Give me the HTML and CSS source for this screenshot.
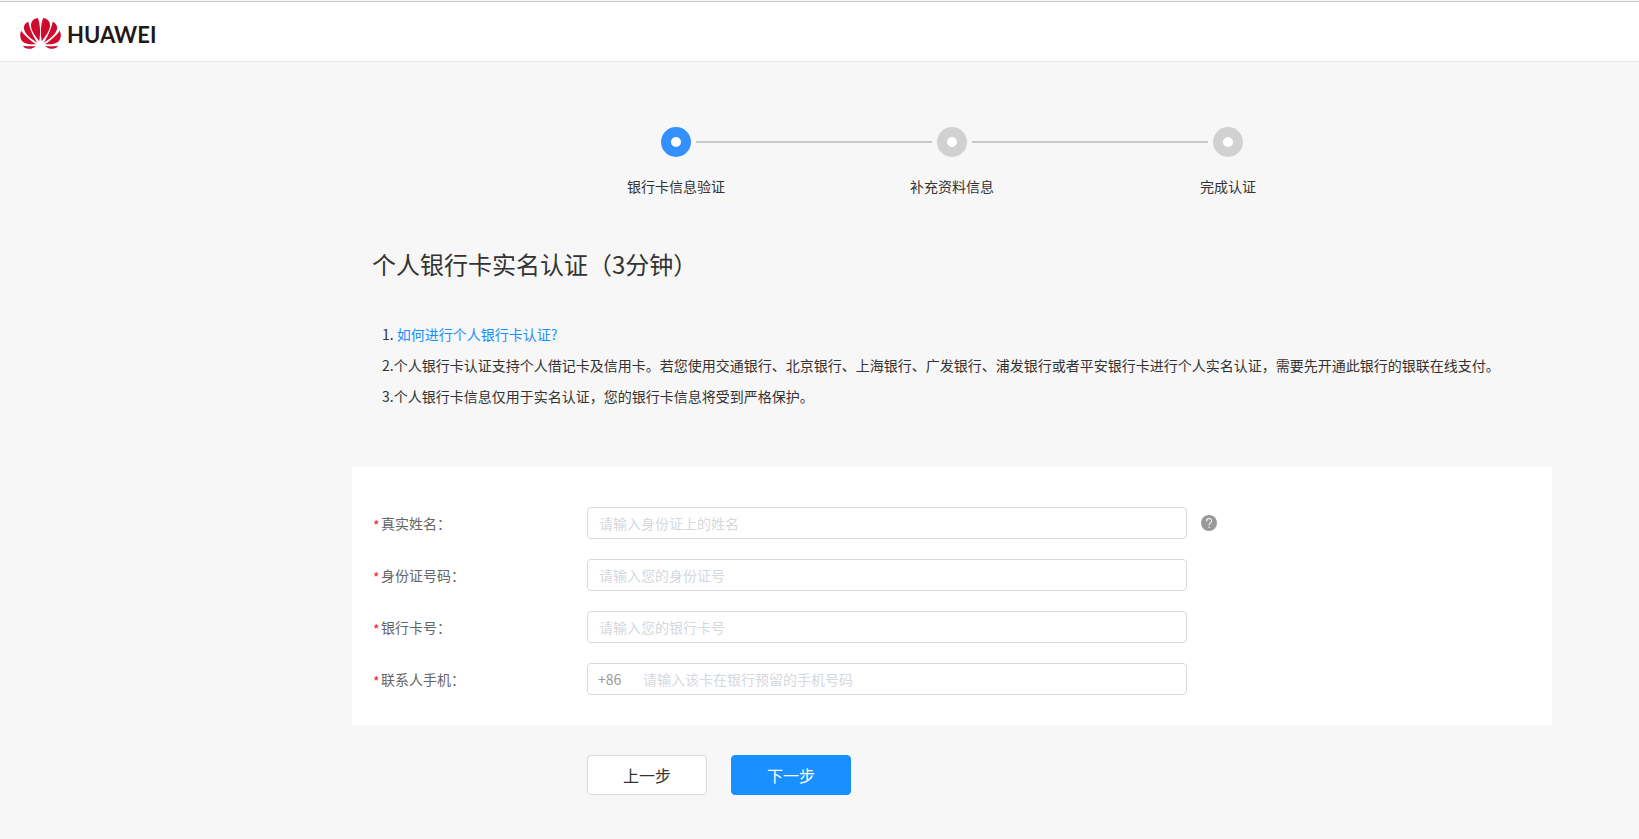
FILE: index.html
```html
<!DOCTYPE html>
<html lang="zh-CN">
<head>
<meta charset="utf-8">
<meta name="viewport" content="width=device-width, initial-scale=1">
<title>个人银行卡实名认证</title>
<link rel="stylesheet" href="styles.css">
</head>
<body>
<header class="header">
  <a class="logo" href="#" aria-label="HUAWEI">
    <svg class="logo-mark" viewBox="0 0 120 92" aria-hidden="true">
      <defs>
        <g id="petals">
          <path d="M56 69C42 50 30 35 32 18C34 7 43 1 52 0C59 17 61 45 56 69Z"/>
          <path d="M51 74C35 64 14 50 11 33C9 22 16 14 24 11C27 30 38 54 51 74Z"/>
          <path d="M47 78C31 79 11 77 3 65C-2 55 -1 45 3 38C13 53 31 68 47 78Z"/>
          <path d="M46 83C40 89 30 93 22 91C15 90 10 86 8 82C20 84 33 84 46 83Z"/>
        </g>
      </defs>
      <g fill="#cf0a2c">
        <use href="#petals"/>
        <use href="#petals" transform="matrix(-1 0 0 1 120 0)"/>
      </g>
    </svg>
    <span class="logo-name">HUAWEI</span>
  </a>
</header>
<main class="main">
  <div class="container">
    <ol class="steps">
      <li class="step step-active"><span class="step-dot"></span><span class="step-name">银行卡信息验证</span></li>
      <li class="step"><span class="step-dot"></span><span class="step-name">补充资料信息</span></li>
      <li class="step"><span class="step-dot"></span><span class="step-name">完成认证</span></li>
    </ol>
    <h1 class="title">个人银行卡实名认证（3分钟）</h1>
    <div class="notes">
      <p>1. <a href="#">如何进行个人银行卡认证?</a></p>
      <p>2.个人银行卡认证支持个人借记卡及信用卡。若您使用交通银行、北京银行、上海银行、广发银行、浦发银行或者平安银行卡进行个人实名认证，需要先开通此银行的银联在线支付。</p>
      <p>3.个人银行卡信息仅用于实名认证，您的银行卡信息将受到严格保护。</p>
    </div>
    <form>
      <div class="panel">
        <div class="row">
          <label class="label" for="name"><span class="star">*</span>真实姓名：</label>
          <div class="field"><input id="name" type="text" placeholder="请输入身份证上的姓名"></div>
          <button class="help" type="button" aria-label="帮助">
            <svg viewBox="0 0 16 16" aria-hidden="true"><circle cx="8" cy="8" r="8" fill="#999"/><path d="M5.500 6.200C5.500 2.700 10.600 2.800 10.600 5.900C10.600 7.700 8 8 8 10.300M8 11.800V13" fill="none" stroke="#fff" stroke-width="1.100"/></svg>
          </button>
        </div>
        <div class="row">
          <label class="label" for="idno"><span class="star">*</span>身份证号码：</label>
          <div class="field"><input id="idno" type="text" placeholder="请输入您的身份证号"></div>
        </div>
        <div class="row">
          <label class="label" for="card"><span class="star">*</span>银行卡号：</label>
          <div class="field"><input id="card" type="text" placeholder="请输入您的银行卡号"></div>
        </div>
        <div class="row">
          <label class="label" for="phone"><span class="star">*</span>联系人手机：</label>
          <div class="field"><span class="prefix">+86</span><input id="phone" type="tel" placeholder="请输入该卡在银行预留的手机号码"></div>
        </div>
      </div>
      <div class="actions">
        <button class="button" type="button">上一步</button>
        <button class="button button-primary" type="submit">下一步</button>
      </div>
    </form>
  </div>
</main>
</body>
</html>
```
FILE: styles.css
```css
* { box-sizing: border-box; }
body {
  margin: 0;
  padding-top: 1px;
  background: #f7f7f7;
  color: #333;
  font: 400 14px/20px "Noto Sans CJK SC", sans-serif;
}
.header {
  display: flex;
  align-items: center;
  height: 61px;
  padding: 4px 20px 0;
  background: #fff;
  border-top: 1px solid #ccc;
  border-bottom: 1px solid #e6e6e6;
}
.logo {
  display: flex;
  align-items: center;
  gap: 6px;
  color: #231815;
  text-decoration: none;
}
.logo-mark { width: 41px; height: 31px; }
.logo-name { padding-top: 2px; font: 700 22px/24px Lato, sans-serif; }
.main { padding: 65px 0 40px 265px; }
.container { max-width: 1200px; margin: 0 auto; }
.steps {
  display: grid;
  grid-template-columns: repeat(3, 276px);
  justify-content: center;
  margin: 0 0 52px;
  padding: 0;
  list-style: none;
}
.step {
  position: relative;
  display: flex;
  flex-direction: column;
  align-items: center;
  gap: 19px;
}
.step-dot {
  width: 30px;
  height: 30px;
  border: 10px solid #d1d1d1;
  border-radius: 50%;
  background: #fff;
}
.step-active .step-dot { border-color: #3391ff; }
.step:not(:last-child)::after {
  content: "";
  position: absolute;
  top: 14px;
  left: calc(50% + 20px);
  width: calc(100% - 40px);
  height: 2px;
  background: #c9c9c9;
}
.title {
  margin: 0 20px 39px;
  font-size: 24px;
  font-weight: 400;
  line-height: 32px;
}
.notes { margin: 0 30px 55px; }
.notes p { margin: 0; line-height: 31px; }
.notes a { color: #1890ff; text-decoration: none; }
.panel {
  display: grid;
  gap: 20px;
  padding: 40px 20px 30px;
  background: #fff;
}
.row { display: flex; align-items: center; }
.label { display: flex; flex: 0 0 215px; padding: 2px 0 0 1px; color: #666; }
.star { width: 8px; padding-top: 2px; color: #f5222d; }
.field {
  display: flex;
  align-items: center;
  flex: 0 1 600px;
  height: 32px;
  border: 1px solid #d9d9d9;
  border-radius: 4px;
  background: #fff;
}
.prefix { width: 44px; padding-left: 10px; color: #999; }
.field input {
  flex: 1;
  min-width: 0;
  padding: 0 11px;
  border: 0;
  outline: 0;
  background: transparent;
  color: #333;
  font: inherit;
}
.field input::placeholder { color: #d5d8dc; opacity: 1; }
.help {
  width: 16px;
  height: 16px;
  margin-left: 14px;
  padding: 0;
  border: 0;
  background: none;
}
.help svg { display: block; }
.actions { display: flex; gap: 24px; padding: 30px 0 0 235px; }
.button {
  width: 120px;
  height: 40px;
  border: 1px solid #d9d9d9;
  border-radius: 4px;
  background: #fff;
  color: #333;
  font: 400 16px/24px "Noto Sans CJK SC", sans-serif;
}
.button-primary { border-color: #1890ff; background: #1890ff; color: #fff; }
```
